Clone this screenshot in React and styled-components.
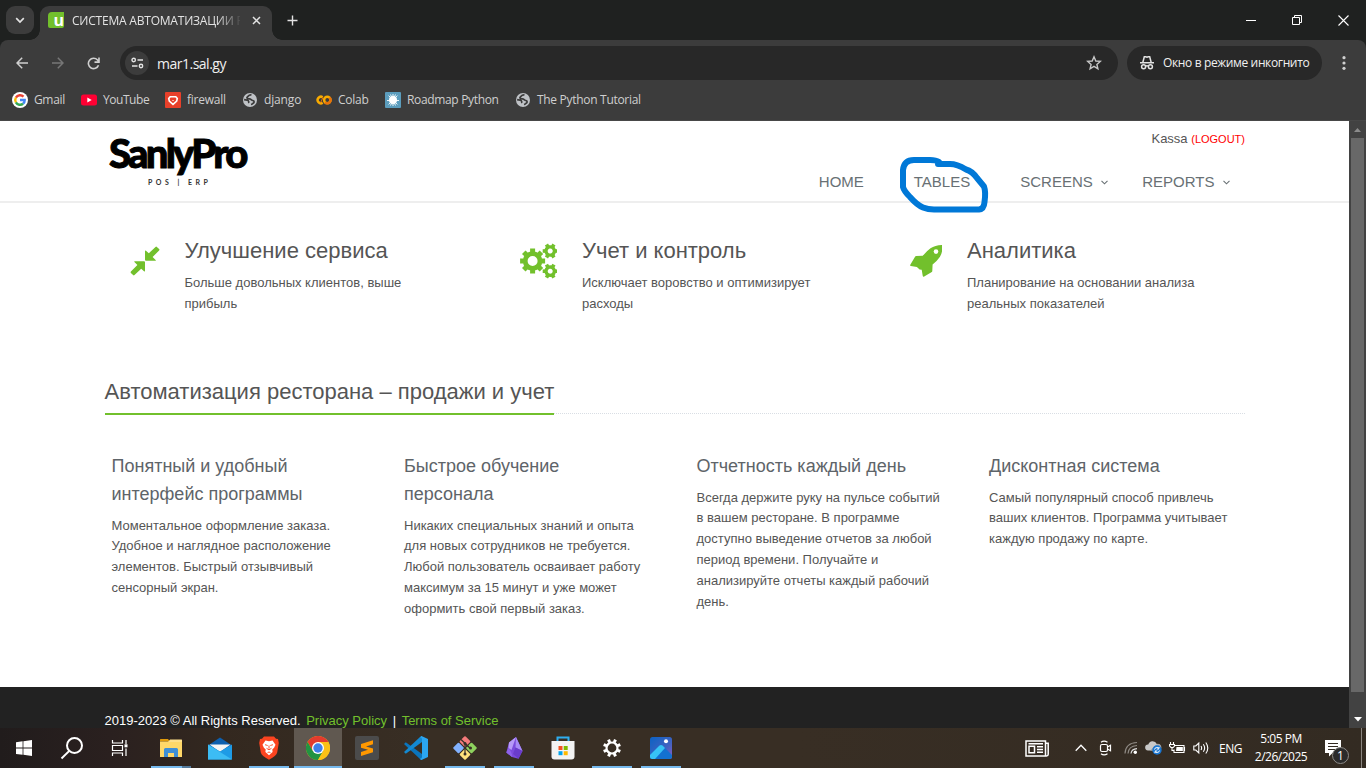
import React from "react";
import styled, { createGlobalStyle } from "styled-components";

const Global = createGlobalStyle`
  * { box-sizing: border-box; }
  html, body { margin: 0; padding: 0; overflow: hidden; background: #1f2120; }
  p, h1, h2, h3 { margin: 0; font-weight: 400; }
  svg { display: block; flex: none; }
`;

const ui = `"Open Sans", "Noto Sans", sans-serif`;
const web = `"Liberation Sans", Arial, sans-serif`;

const Screen = styled.div`
  width: 1366px;
  height: 768px;
  display: flex;
  flex-direction: column;
  overflow: hidden;
  white-space: nowrap;
`;

/* ---------- browser frame ---------- */

const TabStrip = styled.div`
  height: 40px;
  flex: none;
  display: flex;
  align-items: flex-start;
  padding: 6px 0 0 6px;
  background: #1f2120;
  color: #e3e3e3;
  font-family: ${ui};
`;

const TabSearch = styled.div`
  width: 28px;
  height: 28px;
  border-radius: 9px;
  background: #3c3c3c;
  display: grid;
  place-items: center;
  margin-right: 6px;
`;

const Tab = styled.div`
  position: relative;
  width: 232px;
  height: 34px;
  border-radius: 9px 9px 0 0;
  background: #3c3c3c;
  display: flex;
  align-items: center;
  padding: 0 11px 6px 8px;
  &::before, &::after {
    content: "";
    position: absolute;
    bottom: 0;
    width: 10px;
    height: 10px;
  }
  &::before { left: -10px; background: radial-gradient(circle at 0 0, transparent 9.5px, #3c3c3c 10px); }
  &::after { right: -10px; background: radial-gradient(circle at 100% 0, transparent 9.5px, #3c3c3c 10px); }
`;

const Favicon = styled.div`
  width: 16px;
  height: 16px;
  border-radius: 4px 0 2px 2px;
  background: #72c02c;
  color: #fff;
  font: 700 16px/17px ${ui};
  text-align: right;
`;

const TabTitle = styled.div`
  flex: 1;
  margin: 1px 12px 0 8px;
  overflow: hidden;
  font-size: 12px;
  line-height: 18px;
  letter-spacing: -0.21px;
  mask-image: linear-gradient(90deg, #000 145px, transparent 170px);
`;

const NewTab = styled.div`
  width: 28px;
  height: 28px;
  margin-left: 6px;
  display: grid;
  place-items: center;
`;

const WindowButtons = styled.div`
  margin-left: auto;
  display: flex;
  height: 28px;
`;

const WindowButton = styled.div`
  width: 46px;
  display: grid;
  place-items: center;
`;

const Toolbar = styled.div`
  height: 46px;
  flex: none;
  display: flex;
  align-items: center;
  padding: 0 8px 0 8px;
  background: #3c3c3c;
  border-radius: 8px 8px 0 0;
  font-family: ${ui};
  color: #f0f0f0;
`;

const NavButton = styled.div`
  width: 28px;
  height: 28px;
  margin-right: 8px;
  display: grid;
  place-items: center;
`;

const Omnibox = styled.div`
  width: 998px;
  height: 34px;
  margin-left: 4px;
  border-radius: 17px;
  background: #282828;
  display: flex;
  align-items: center;
  padding: 0 16px 0 5px;
  font-size: 14px;
  letter-spacing: -0.5px;
`;

const SiteInfo = styled.div`
  width: 24px;
  height: 24px;
  border-radius: 50%;
  background: #3c3c3c;
  display: grid;
  place-items: center;
  margin-right: 8px;
`;

const Url = styled.span`
  flex: 1;
`;

const Incognito = styled.div`
  width: 195px;
  height: 34px;
  margin-left: 9px;
  border-radius: 17px;
  background: #282828;
  display: flex;
  align-items: center;
  gap: 8px;
  padding-left: 12px;
  font-size: 12px;
  letter-spacing: -0.36px;
  span { padding-bottom: 1px; }
`;

const MenuDots = styled.div`
  margin-left: 14px;
`;

const Bookmarks = styled.div`
  height: 35px;
  flex: none;
  display: flex;
  padding: 0 0 6px 12px;
  background: #3c3c3c;
  border-bottom: 1px solid #474747;
  font-family: ${ui};
  font-size: 12px;
  color: #cfcfcf;
`;

const Bookmark = styled.div`
  width: ${(p) => p.$w}px;
  letter-spacing: ${(p) => p.$ls}px;
  display: flex;
  align-items: center;
  gap: 6px;
  span { padding-bottom: 1px; }
`;

/* ---------- web page ---------- */

const Viewport = styled.div`
  height: 607px;
  flex: none;
  display: flex;
`;

const Page = styled.main`
  position: relative;
  width: 1349px;
  background: #fff;
  font-family: ${web};
  color: #555;
  font-size: 13px;
  display: flex;
  flex-direction: column;
`;

const Header = styled.header`
  height: 82px;
  padding: 0 104px 0 104.5px;
  border-bottom: 2px solid #eee;
  display: flex;
  justify-content: space-between;
`;

const Brand = styled.div`
  width: 148px;
  padding: 8px 0 0 4.5px;
  color: #000;
  font-family: Lato, ${web};
`;

const BrandName = styled.div`
  font-size: 40px;
  line-height: 49px;
  font-weight: 900;
  letter-spacing: -2.75px;
  -webkit-text-stroke: 1px #000;
`;

const BrandTag = styled.div`
  margin-left: 39px;
  font-size: 7px;
  font-weight: 700;
  line-height: 8px;
  letter-spacing: 3.5px;
  color: #333;
`;

const HeaderRight = styled.div`
  display: flex;
  flex-direction: column;
  align-items: flex-end;
`;

const User = styled.div`
  height: 18px;
  margin-top: 9px;
  line-height: 18px;
  span { color: #f00; font-size: 11px; }
`;

const Menu = styled.nav`
  display: flex;
  margin-top: 25px;
  padding-right: 15.5px;
  gap: 34.5px;
  font-size: 15px;
  line-height: 18px;
  color: #687074;
`;

const MenuItem = styled.div`
  display: flex;
  align-items: center;
  gap: 8px;
  margin-right: ${(p) => (p.$plain ? 15.5 : 0)}px;
`;

const Scribble = styled.svg`
  position: absolute;
  left: 895px;
  top: 32px;
`;

const Features = styled.section`
  display: grid;
  grid-template-columns: repeat(3, 390px);
  padding: 34px 0 0 129.5px;
  height: 163px;
`;

const Feature = styled.div`
  display: flex;
  align-items: flex-start;
  gap: 25px;
`;

const FeatureIcon = styled.div`
  height: 47px;
  display: flex;
  align-items: center;
  color: #72c02c;
`;

const FeatureTitle = styled.h2`
  font-size: 22px;
  line-height: 28px;
  margin-bottom: 8px;
`;

const Copy = styled.p`
  line-height: 20.8px;
  white-space: pre-line;
`;

const Headline = styled.div`
  margin: 0 104.5px;
  height: 48px;
  border-bottom: 1px dotted #d9dee4;
`;

const HeadlineText = styled.h2`
  display: inline-block;
  height: 49px;
  font-size: 22px;
  line-height: 51px;
  border-bottom: 2px solid #72c02c;
`;

const Columns = styled.section`
  display: grid;
  grid-template-columns: repeat(4, 292.5px);
  padding: 38px 0 0 111.5px;
`;

const ColumnTitle = styled.h3`
  font-size: 18px;
  line-height: 28px;
  color: #5e6469;
  margin-bottom: 7.6px;
  white-space: pre-line;
`;

const Footer = styled.footer`
  margin-top: auto;
  height: 41px;
  background: #222;
  color: #fff;
  padding: 24.5px 0 0 104.5px;
  line-height: 18px;
  display: flex;
  gap: 5.6px;
  a { color: #72c02c; }
`;

const Scrollbar = styled.div`
  width: 17px;
  background: #424242;
  display: flex;
  flex-direction: column;
  align-items: center;
  justify-content: space-between;
  padding: 6px 0 6px;
`;

const Thumb = styled.div`
  width: 13px;
  height: 554px;
  margin: 6px 0 auto;
  background: #686868;
`;

/* ---------- taskbar ---------- */

const Taskbar = styled.div`
  height: 40px;
  flex: none;
  display: flex;
  align-items: stretch;
  color: #fff;
  font-family: ${ui};
  font-size: 12px;
  background: linear-gradient(90deg, #211c1c 0, #2a201f 110px, #33281f 220px, #382e24 420px, #382e24 800px, #332b22 1366px);
`;

const Launcher = styled.div`
  width: 48px;
  display: grid;
  place-items: center;
`;

const TaskItem = styled.div`
  width: 48px;
  margin-left: ${(p) => (p.$first ? 3 : 1)}px;
  position: relative;
  display: grid;
  place-items: center;
  background: ${(p) => (p.$active ? "#605850" : "transparent")};
  &::after {
    content: "";
    position: absolute;
    bottom: 0;
    left: ${(p) => (p.$active ? 0 : 4)}px;
    right: ${(p) => (p.$active ? 0 : 4)}px;
    height: 2px;
    background: ${(p) =>
      p.$stack ? "linear-gradient(90deg, #76b9ed 31px, #547a9b 31px)" : p.$open ? "#76b9ed" : "transparent"};
  }
`;

const Tray = styled.div`
  margin-left: auto;
  display: flex;
  align-items: center;
  padding-right: 4px;
`;

const TraySlot = styled.div`
  width: ${(p) => p.$w}px;
  flex: none;
  display: flex;
  justify-content: center;
`;

const Language = styled(TraySlot)`
  letter-spacing: -0.4px;
`;

const Clock = styled.div`
  width: 72px;
  text-align: center;
  line-height: 18px;
  letter-spacing: -0.5px;
`;

const Notice = styled.div`
  position: relative;
  width: 45px;
  height: 40px;
  padding: 12px 0 0 8px;
  border-right: 1px solid #8a857f;
`;

const NoticeCount = styled.div`
  position: absolute;
  left: 15px;
  top: 19px;
  width: 17px;
  height: 17px;
  border-radius: 50%;
  border: 1px solid #8d8b88;
  background: #2b2b2b;
  font-size: 12px;
  line-height: 15px;
  text-align: center;
`;

/* ---------- icons ---------- */

const Line = ({ d, w = 16, h = 16, c = "#e3e3e3", s = 1.5, children }) => (
  <svg width={w} height={h} viewBox={`0 0 ${w} ${h}`} fill="none" stroke={c} strokeWidth={s}>
    {d && <path d={d} />}
    {children}
  </svg>
);

const Globe = () => (
  <svg width="16" height="16" viewBox="-.5 -.5 16 16">
    <circle cx="7.5" cy="7.5" r="7" fill="#bfc2c6" />
    <path d="M9 2.500C6.500 2 5.500 4 4.500 4.800 4 5.800 5.500 6.300 7 6.300c1.500 0 1.800 1.700 3.300 1.700 1.700.2 1.500 1.800.7 2.500-1 .6-1.200 1.200-2.500 1.500M1.600 7.200c1.600.3 3.200 0 4.200 1 .8.900.2 1.500.6 2.300" fill="none" stroke="#3c3c3c" strokeWidth="1.700" />
  </svg>
);

const Google = () => (
  <svg width="16" height="16" viewBox="0 0 16 16" fill="none" strokeWidth="2.400">
    <circle cx="8" cy="8" r="8" fill="#fff" />
    <path d="M11.500 4.700A4.800 4.800 0 0 0 3.900 5.600" stroke="#ea4335" />
    <path d="M3.900 5.600a4.800 4.800 0 0 0 0 4.800" stroke="#fbbc05" />
    <path d="M3.900 10.400a4.800 4.800 0 0 0 7.200 1.300" stroke="#34a853" />
    <path d="M11.100 11.700A4.700 4.700 0 0 0 12.700 8H8" stroke="#4285f4" />
  </svg>
);

const YouTube = () => (
  <svg width="16" height="16" viewBox="0 0 16 16">
    <rect y="2.500" width="16" height="11" rx="2.500" fill="#ff0033" />
    <path d="M6.300 5.500v5L10.700 8z" fill="#fff" />
  </svg>
);

const Firewall = () => (
  <svg width="16" height="16" viewBox="0 0 16 16">
    <rect width="16" height="16" rx="1" fill="#e8402a" />
    <path d="M5.200 4.700h5.600l1.500 1.800-.6 2.500L8 12.400 4.300 9l-.6-2.500z" fill="none" stroke="#fff" strokeWidth="1.600" />
    <path d="M7 8h2l-1 1.200z" fill="#fff" />
  </svg>
);

const Colab = () => (
  <svg width="16" height="16" viewBox="0 0 16 16" fill="none" strokeWidth="2.500">
    <path d="M6.700 5.200A3.300 3.300 0 1 0 6.700 10.800" stroke="#f9ab00" />
    <circle cx="11.300" cy="8" r="3.200" stroke="#f9ab00" />
    <path d="M9 10.300a3.200 3.200 0 0 0 4.600-4.600" stroke="#e8710a" />
    <path d="M6.900 5.500 4.600 10.800" stroke="#e8710a" strokeWidth="1" />
  </svg>
);

const Roadmap = () => (
  <svg width="16" height="16" viewBox="0 0 16 16">
    <rect width="16" height="16" rx="1" fill="#5c9dbd" />
    <circle cx="8" cy="8" r="4" fill="#fff" />
    <path d="M8 2v12M2 8.500h12M3.600 3.600l8.800 8.800M12.400 3.600l-8.800 8.800M5.500 2.500l5 11M10.500 2.500l-5 11" stroke="#fff" strokeWidth=".9" />
  </svg>
);

const IncognitoIcon = () => (
  <svg width="16" height="16" viewBox="0 0 16 16" fill="none" stroke="#e3e3e3" strokeWidth="1.500">
    <path d="M1 7.700h14M3.800 7.500 5.300 1.700h1.500l1.200.5 1.200-.5h1.500l1.500 5.800" />
    <circle cx="4.600" cy="11.700" r="2" />
    <circle cx="11.400" cy="11.700" r="2" />
    <path d="M6.600 11.200q1.400-.8 2.800 0" />
  </svg>
);

const compressArrow =
  "M15 13.800V5.200q0-1.300 1-.4l2.800 2.500L25.500.9q.7-.7 1.400 0l2.200 2.200q.7.7 0 1.400L22.600 11l3 2.900q.8.9-.5.9H16q-1 0-1-1z";

const Compress = () => (
  <svg width="30" height="30" viewBox="0 0 30 30" fill="currentColor">
    <path d={compressArrow} />
    <path d={compressArrow} transform="rotate(180 15 15)" />
  </svg>
);

const Gear = ({ x, y, r, hole, teeth, tooth, turn = 0 }) => (
  <g transform={`translate(${x} ${y}) rotate(${turn})`} fill="none" stroke="currentColor">
    <circle r={(r * 0.78 + hole) / 2} strokeWidth={r * 0.78 - hole} />
    {Array.from({ length: teeth }, (_, i) => (
      <path key={i} d={`M0 ${-hole - 1}V${-r}`} strokeWidth={tooth} transform={`rotate(${(360 / teeth) * i})`} />
    ))}
  </g>
);

const Gears = () => (
  <svg width="37.500" height="36" viewBox="0 0 37.500 36">
    <Gear x={12.600} y={18} r={12.500} hole={5} teeth={8} tooth={5} />
    <Gear x={30.200} y={8} r={7.500} hole={2.500} teeth={6} tooth={3.600} turn={30} />
    <Gear x={30.200} y={28.200} r={7.500} hole={2.500} teeth={6} tooth={3.600} turn={30} />
  </svg>
);

const Rocket = () => (
  <svg width="32.500" height="32" viewBox="0 0 32.500 32">
    <path
      d="M31.800 0Q25 .2 20.500 3.300 17 5.800 12.800 10.700L6.100 11q-.6.100-.9.600L.3 19.700q-.5 1 .5 1.300l6.100.9 2.700 2.500-.1.200 2.200.2 1 5.900q.3 1.400 1.500.8l7.600-4.600q.5-.3.500-.9l.3-6.500q5-4.200 7.200-7.600Q32.800 7 32.400.6q0-.6-.6-.6z"
      fill="currentColor"
    />
    <circle cx="26" cy="6.600" r="2.300" fill="#fff" />
  </svg>
);

const Caret = () => <Line w={7} h={5} c="#687074" s={1.100} d="M.5.8l3 3 3-3" />;

const Magnifier = () => (
  <Line w={24} h={24} c="#fff" s={2}>
    <circle cx="14.500" cy="9.500" r="7.500" />
    <path d="M9.300 14.900 1.500 22.500" />
  </Line>
);

const Windows = () => (
  <svg width="16" height="16" viewBox="0 0 16 16" fill="#fff">
    <path d="M0 2.200 6.600 1.300V7.600H0zM7.400 1.200 16 0v7.600H7.400zM0 8.400h6.600v6.400L0 13.900zM7.400 8.400H16V16l-8.600-1.200z" />
  </svg>
);

const TaskView = () => (
  <Line w={18} h={16} c="#fff" s={1.200}>
    <path d="M1.500 0v3h10V0M1.500 16v-3h10v3M1.500 5.500h10v5h-10zM15 0v4M15 8.500V16" />
    <path d="M13.500 4.300h3v3h-3z" fill="#fff" stroke="none" />
  </Line>
);

const Explorer = () => (
  <svg width="22" height="20" viewBox="0 0 22 20">
    <path d="M0 1.500Q0 1 .5 1H8l2 2.500H0z" fill="#e09b0c" />
    <path d="M0 3.500h22V19H0z" fill="#ffd869" />
    <path d="M10 1.500h11.500q.5 0 .5.500v2H8z" fill="#ffe08a" />
    <path d="M4 19v-7.500Q4 10 5.500 10h11q1.500 0 1.500 1.500V19h-4v-4H8v4z" fill="#3f8fd6" />
  </svg>
);

const Mail = () => (
  <svg width="24" height="23" viewBox="0 0 24 23">
    <path d="M0 8.500 12 .5l12 8v5H0z" fill="#0d5fae" />
    <path d="M1.500 7.500h21L12 15z" fill="#f4f4f4" />
    <path d="M0 7.500 12 14.500 24 7.500V22.500H0z" fill="#1e9be6" />
    <path d="M0 7.500 24 22.500H0z" fill="#3cbcf4" />
  </svg>
);

const Brave = () => (
  <svg width="20" height="24" viewBox="0 0 20 24">
    <path d="M5 .5h10l2 2.200 2 .2.800 4.100-1.600 9.500Q17.500 20 10 23.700 2.500 20 1.800 16.500L.2 7 1 2.900l2-.2z" fill="#fb4420" />
    <path d="M6.500 4.500 10 5.300l3.500-.8 3 4.200-1.400 3.100-1.800 1.700.3 2.500-3.600 3.300-3.600-3.300.3-2.500-1.800-1.700-1.400-3.100z" fill="#fff" />
    <path d="M6 8.700 8.700 9.500M14 8.700 11.300 9.500M10 9.500v3.200M7.500 12.300l2.500 1.500 2.500-1.500M8.500 16.700l1.500-.7 1.500.7" fill="none" stroke="#fb4420" strokeWidth=".9" />
  </svg>
);

const Chrome = () => (
  <svg width="24" height="24" viewBox="0 0 24 24">
    <circle cx="12" cy="12" r="12" fill="#fbc116" />
    <path d="M1.600 6A12 12 0 0 1 22.400 6H12v6l-5.200 3z" fill="#e33b2e" />
    <path d="M1.600 6A12 12 0 0 0 12 24l5.200-9L12 12l-5.200 3z" fill="#229342" />
    <path d="M22.400 6H12v6l5.200 3L12 24A12 12 0 0 0 22.400 6z" fill="#fbc116" />
    <circle cx="12" cy="12" r="6" fill="#fff" />
    <circle cx="12" cy="12" r="4.700" fill="#3f7fea" />
  </svg>
);

const Sublime = () => (
  <svg width="24" height="24" viewBox="0 0 24 24">
    <rect width="24" height="24" rx="2" fill="#4b4b4b" />
    <path d="M6 8 18 4.200V8.300L11 10.500 18 12.500V16.200L6 20V16L13 13.800 6 11.700z" fill="#ff9800" />
  </svg>
);

const VsCode = () => (
  <svg width="24" height="24" viewBox="0 0 24 24">
    <path d="M0 8 1.800 6.300 18 18V24L16 23z" fill="#0a75bd" />
    <path d="M0 16 1.800 17.700 18 6V0L16 1z" fill="#1389d2" />
    <path d="M17.500 0 24 3v18l-6.500 3q-1 0-1.500-1.200 2 0 2-2V3.200q0-2-2-2z" fill="#2ba6f2" />
  </svg>
);

const Git = () => (
  <svg width="24" height="24" viewBox="0 0 24 24">
    <rect x="8" y="1.500" width="8" height="8" rx="1" transform="rotate(45 12 5.500)" fill="#f57b7b" />
    <rect x="1.500" y="8" width="8" height="8" rx="1" transform="rotate(45 5.500 12)" fill="#82b2ff" />
    <rect x="14.500" y="8" width="8" height="8" rx="1" transform="rotate(45 18.500 12)" fill="#8ed25e" />
    <rect x="8" y="14.500" width="8" height="8" rx="1" transform="rotate(45 12 18.500)" fill="#ffe27c" />
    <path d="M8 3.500 16 11M12 8v10M12 8l5 4" stroke="#383027" strokeWidth="1.200" />
    <g fill="#383027">
      <circle cx="12" cy="7.500" r="1.500" />
      <circle cx="12" cy="18" r="1.500" />
      <circle cx="17.500" cy="12" r="1.500" />
    </g>
  </svg>
);

const Obsidian = () => (
  <svg width="17" height="22" viewBox="0 0 17 22">
    <path d="M10 0 3 5.500.3 15.500 6 20l6.500 1.800L16.500 14l-2.300-5z" fill="#7c4bdc" />
    <path d="M10 0 14.200 9 16.500 14l-7-3.500z" fill="#a88bf5" />
    <path d="M10 0 3 5.500 2.500 11 5.500 13z" fill="#b79af8" />
    <path d="M2.500 11 .3 15.500 6 20q.5-4-3.500-9z" fill="#8e62ea" />
    <path d="M9.500 10.500 7 17l5.500 4.800L16.500 14z" fill="#6a3ccb" />
  </svg>
);

const Store = () => (
  <svg width="24" height="24" viewBox="0 0 24 24">
    <path d="M6.500 5.500v-4h11v4" fill="none" stroke="#2eaef0" strokeWidth="2" />
    <path d="M.5 5h23v15.500q0 3-3 3h-17q-3 0-3-3z" fill="#f3f3f3" />
    <path d="M7.500 10h4v4h-4z" fill="#f25022" />
    <path d="M12.700 10h4v4h-4z" fill="#7fba00" />
    <path d="M7.500 15.200h4v4h-4z" fill="#00a4ef" />
    <path d="M12.700 15.200h4v4h-4z" fill="#ffb900" />
  </svg>
);

const Settings = () => (
  <svg width="18" height="18" viewBox="-9 -9 18 18" fill="none" stroke="#fff">
    <circle r="5.500" strokeWidth="2.200" />
    {[22.5, 67.5, 112.5, 157.5, 202.5, 247.5, 292.5, 337.5].map((a) => (
      <path key={a} d="M0-6v-3" strokeWidth="3" transform={`rotate(${a})`} />
    ))}
  </svg>
);

const Photos = () => (
  <svg width="22" height="22" viewBox="0 0 22 22">
    <defs>
      <linearGradient id="sky" x1="0" y1="0" x2="1" y2="1">
        <stop offset="0" stopColor="#0b62c4" />
        <stop offset=".6" stopColor="#3f62c0" />
        <stop offset="1" stopColor="#8a5cc4" />
      </linearGradient>
      <clipPath id="frame"><rect width="22" height="22" rx="2.500" /></clipPath>
    </defs>
    <g clipPath="url(#frame)">
      <rect width="22" height="22" fill="url(#sky)" />
      <path d="M0 18 9.500 8.600q1.500-1.400 3 0L22 18v4H0z" fill="#1271d1" />
      <path d="M0 18 9.500 8.600q1.500-1.400 3 0L15 11 5 22H0z" fill="#37c3f5" />
      <circle cx="16" cy="4.200" r="2" fill="#fff" />
    </g>
  </svg>
);

const News = () => (
  <Line w={24} h={17} c="#fff" s={1.500}>
    <path d="M20.500 3V1H1v15h20.500q1.700 0 1.700-1.700V3.200h-2.700v12" />
    <path d="M4 6.300h5.500v6.400H4zM3.500 3.700h14.500M12 6.700h6M12 9.500h6M12 12.300h6" />
  </Line>
);

const Camera = () => (
  <Line w={13} h={16} c="#fff" s={1.200}>
    <rect x="1.500" y="4.500" width="7" height="7" rx="1.500" />
    <path d="M8.500 7 11.500 5.300v5.400L8.500 9M2 2.300Q5 0 8.500 2.300M2 13.700q3 2.300 6.500 0" />
  </Line>
);

const Wifi = () => (
  <Line w={14} h={14} c="#8f8a84" s={1.200}>
    <path d="M1 12.500Q1.500 2 13 1.500M4 12.500Q4.500 5 13 4.500" />
    <path d="M7 12.500Q7.500 8 13 7.600" stroke="#ddd" />
    <circle cx="11.300" cy="11.300" r="1.700" fill="#fff" stroke="none" />
  </Line>
);

const Cloud = () => (
  <svg width="17" height="14" viewBox="0 0 17 14">
    <path d="M3 9.500a3 3 0 0 1 .3-6A4.500 4.500 0 0 1 11.800 3a3.300 3.300 0 0 1 1.700 6.500z" fill="#c9c9c9" />
    <path d="M5 9.500 12 3.200a3.300 3.300 0 0 1 2 6.300z" fill="#a4a4a4" />
    <circle cx="12" cy="9" r="4.700" fill="#1976d2" />
    <path d="M9.500 8.500a2.500 2.500 0 0 1 4.500-1v-1.500M14.500 9.500a2.500 2.500 0 0 1-4.500 1v1.500M10 10h2.300M14 8h-2.300" fill="none" stroke="#fff" strokeWidth="1" />
  </svg>
);

const Battery = () => (
  <Line w={17} h={12} c="#fff" s={1.100}>
    <path d="M6 3.500h9v7H5V7.500M15.500 5v4" />
    <path d="M7.500 5h6.300v4H7z" fill="#fff" stroke="none" />
    <path d="M1.500 0v2.500M4.500 0v2.500M.5 2.500h5V4L4.200 5.500H2L.5 4zM3 5.500v3h2" />
  </Line>
);

const Speaker = () => (
  <Line w={17} h={14} c="#fff" s={1.100}>
    <path d="M.8 5v4h2l3 3V2l-3 3zM8 5q1.300 2 0 4M10.300 3.300q2.700 3.700 0 7.400M12.800 1.500q4 5.500 0 11" />
  </Line>
);

const NoticeIcon = () => (
  <svg width="16" height="17" viewBox="0 0 16 17">
    <path d="M0 0h16v13H7.500L4 16.500V13H0z" fill="#fff" />
    <path d="M3 3.500h10M3 6.500h10M3 9.500h7" stroke="#332b22" />
  </svg>
);

/* ---------- data ---------- */

const bookmarks = [
  ["Gmail", 69, -0.35, <Google />],
  ["YouTube", 84, -0.45, <YouTube />],
  ["firewall", 77, -0.25, <Firewall />],
  ["django", 74, -0.15, <Globe />],
  ["Colab", 69, -0.25, <Colab />],
  ["Roadmap Python", 130, -0.34, <Roadmap />],
  ["The Python Tutorial", 140, -0.3, <Globe />],
];

const features = [
  [<Compress />, "Улучшение сервиса", "Больше довольных клиентов, выше\nприбыль"],
  [<Gears />, "Учет и контроль", "Исключает воровство и оптимизирует\nрасходы"],
  [<Rocket />, "Аналитика", "Планирование на основании анализа\nреальных показателей"],
];

const columns = [
  ["Понятный и удобный\nинтерфейс программы", "Моментальное оформление заказа.\nУдобное и наглядное расположение\nэлементов. Быстрый отзывчивый\nсенсорный экран."],
  ["Быстрое обучение\nперсонала", "Никаких специальных знаний и опыта\nдля новых сотрудников не требуется.\nЛюбой пользователь осваивает работу\nмаксимум за 15 минут и уже может\nоформить свой первый заказ."],
  ["Отчетность каждый день", "Всегда держите руку на пульсе событий\nв вашем ресторане. В программе\nдоступно выведение отчетов за любой\nпериод времени. Получайте и\nанализируйте отчеты каждый рабочий\nдень."],
  ["Дисконтная система", "Самый популярный способ привлечь\nваших клиентов. Программа учитывает\nкаждую продажу по карте."],
];

const tasks = [
  { icon: <Explorer />, open: true, stack: true },
  { icon: <Mail /> },
  { icon: <Brave />, open: true },
  { icon: <Chrome />, open: true, active: true },
  { icon: <Sublime /> },
  { icon: <VsCode /> },
  { icon: <Git />, open: true },
  { icon: <Obsidian />, open: true },
  { icon: <Store /> },
  { icon: <Settings />, open: true },
  { icon: <Photos />, open: true },
];

export default function App() {
  return (
    <Screen>
      <Global />
      <TabStrip>
        <TabSearch><Line w={10} h={7} s={1.700} d="M1.200 1.200 5 5l3.800-3.800" /></TabSearch>
        <Tab>
          <Favicon>u</Favicon>
          <TabTitle>СИСТЕМА АВТОМАТИЗАЦИИ Р</TabTitle>
          <Line w={9} h={9} s={1.500} d="M1 1l7 7M8 1 1 8" />
        </Tab>
        <NewTab><Line w={11} h={11} s={1.400} d="M5.500.5v10M.5 5.500h10" /></NewTab>
        <WindowButtons>
          <WindowButton><Line w={10} h={10} c="#fff" s={1} d="M0 5.500h10" /></WindowButton>
          <WindowButton><Line w={10} h={10} c="#fff" s={1} d="M.5 2.500h7v7h-7zM2.500 2.500v-2h7v7h-2" /></WindowButton>
          <WindowButton><Line w={11} h={11} c="#fff" s={1.100} d="M.5.5l10 10M10.500.5l-10 10" /></WindowButton>
        </WindowButtons>
      </TabStrip>

      <Toolbar>
        <NavButton><Line w={12} h={12} c="#d0d0d0" d="M12 6H1M6.200.8 1 6l5.200 5.200" /></NavButton>
        <NavButton><Line w={12} h={12} c="#777" d="M0 6h11M5.800.8 11 6l-5.200 5.200" /></NavButton>
        <NavButton><Line w={14} h={13} c="#d0d0d0" s={1.600} d="M11.500 8.200a5.200 5.200 0 1 1-1-5.200l1.500 1.700M12 .5v4.600H7.500" /></NavButton>
        <Omnibox>
          <SiteInfo>
            <Line w={13} h={12} s={1.400}>
              <circle cx="2.700" cy="3" r="1.700" />
              <circle cx="10" cy="9" r="1.700" />
              <path d="M6.500 3H12M1 9h5.500" />
            </Line>
          </SiteInfo>
          <Url>mar1.sal.gy</Url>
          <Line w={16} h={16} c="#c7c7c7" s={1.400} d="M8 1.800 9.800 6l4.500.4-3.400 3 1 4.400L8 11.400l-3.900 2.400 1-4.400-3.400-3L6.200 6z" />
        </Omnibox>
        <Incognito><IncognitoIcon /><span>Окно в режиме инкогнито</span></Incognito>
        <MenuDots>
          <svg width="16" height="16" viewBox="0 0 16 16" fill="#d0d0d0">
            <circle cx="8" cy="2.700" r="1.600" /><circle cx="8" cy="8" r="1.600" /><circle cx="8" cy="13.300" r="1.600" />
          </svg>
        </MenuDots>
      </Toolbar>

      <Bookmarks>
        {bookmarks.map(([label, w, ls, icon]) => (
          <Bookmark key={label} $w={w} $ls={ls}>{icon}<span>{label}</span></Bookmark>
        ))}
      </Bookmarks>

      <Viewport>
        <Page>
          <Header>
            <Brand>
              <BrandName>SanlyPro</BrandName>
              <BrandTag>POS | ERP</BrandTag>
            </Brand>
            <HeaderRight>
              <User>Kassa <span>(LOGOUT)</span></User>
              <Menu>
                <MenuItem $plain>HOME</MenuItem>
                <MenuItem $plain>TABLES</MenuItem>
                <MenuItem>SCREENS<Caret /></MenuItem>
                <MenuItem>REPORTS<Caret /></MenuItem>
              </Menu>
            </HeaderRight>
          </Header>

          <Features>
            {features.map(([icon, title, text]) => (
              <Feature key={title}>
                <FeatureIcon>{icon}</FeatureIcon>
                <div>
                  <FeatureTitle>{title}</FeatureTitle>
                  <Copy>{text}</Copy>
                </div>
              </Feature>
            ))}
          </Features>

          <Headline><HeadlineText>Автоматизация ресторана – продажи и учет</HeadlineText></Headline>

          <Columns>
            {columns.map(([title, text]) => (
              <div key={title}>
                <ColumnTitle>{title}</ColumnTitle>
                <Copy>{text}</Copy>
              </div>
            ))}
          </Columns>

          <Footer>
            <span>2019-2023 © All Rights Reserved.</span>
            <a>Privacy Policy</a>
            <span>|</span>
            <a>Terms of Service</a>
          </Footer>

          <Scribble width="100" height="66" viewBox="895 153 100 66" fill="none" stroke="#0078d7" strokeWidth="6" strokeLinecap="round" strokeLinejoin="round">
            <path d="M939 162Q936 160 930 160H914Q904 160 903 170V187Q904 191 910 197 917 205 923 207.500 928 209.500 934 209.500H979Q984 209 984.500 202 986 192 984 186.500L977 178Q972 171 966 169.500 957 164 950 164H938" />
          </Scribble>
        </Page>
        <Scrollbar>
          <svg width="7" height="5" viewBox="0 0 7 5"><path d="M0 5 3.500 1 7 5z" fill="#8b8b8b" /></svg>
          <Thumb />
          <svg width="8" height="5" viewBox="0 0 8 5"><path d="M0 0h8L4 4.500z" fill="#fff" /></svg>
        </Scrollbar>
      </Viewport>

      <Taskbar>
        <Launcher><Windows /></Launcher>
        <Launcher><Magnifier /></Launcher>
        <Launcher><TaskView /></Launcher>
        {tasks.map((t, i) => (
          <TaskItem key={i} $first={i === 0} $open={t.open} $active={t.active} $stack={t.stack}>{t.icon}</TaskItem>
        ))}
        <Tray>
          <TraySlot $w={76}><News /></TraySlot>
          <TraySlot $w={12}><Line w={12} h={8} c="#fff" s={1.300} d="M.7 6.700 6 1.300l5.300 5.400" /></TraySlot>
          <TraySlot $w={36}><Camera /></TraySlot>
          <TraySlot $w={15}><Wifi /></TraySlot>
          <TraySlot $w={30}><Cloud /></TraySlot>
          <TraySlot $w={18}><Battery /></TraySlot>
          <TraySlot $w={30}><Speaker /></TraySlot>
          <Language $w={29}>ENG</Language>
          <Clock>5:05 PM<br />2/26/2025</Clock>
          <Notice><NoticeIcon /><NoticeCount>1</NoticeCount></Notice>
        </Tray>
      </Taskbar>
    </Screen>
  );
}
